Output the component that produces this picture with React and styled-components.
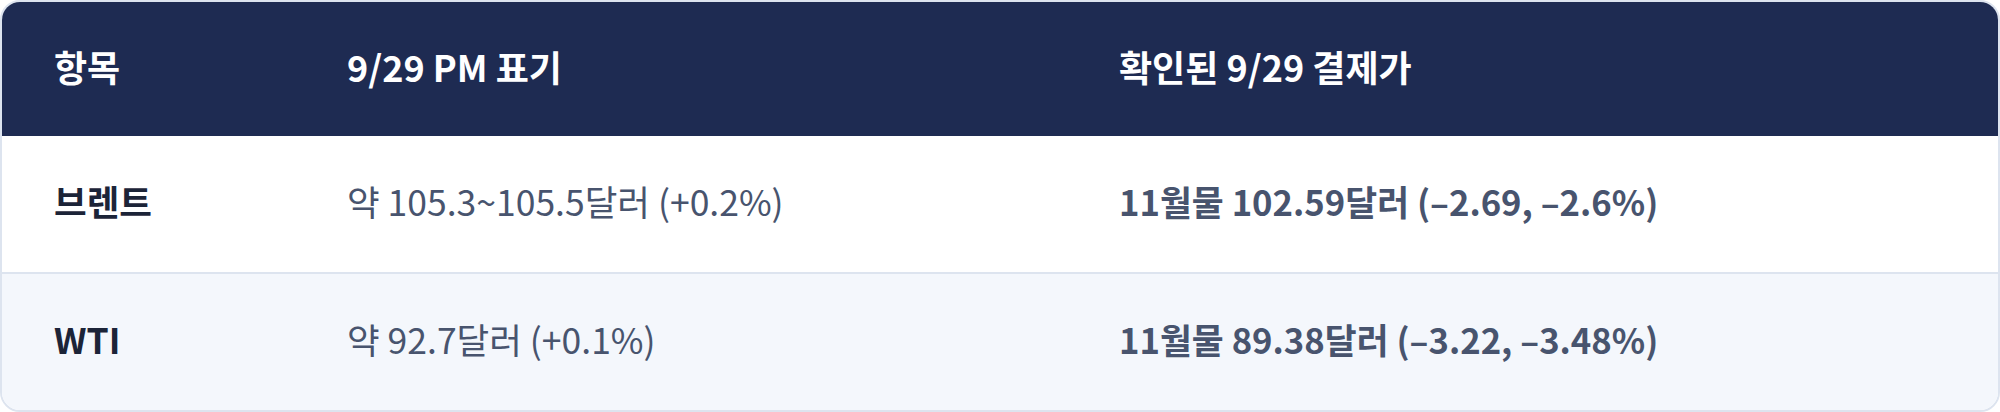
import React from "react";
import styled, { createGlobalStyle } from "styled-components";

const rows = [
  {
    item: "브렌트",
    pm: "약 105.3~105.5달러 (+0.2%)",
    settle: "11월물 102.59달러 (–2.69, –2.6%)",
  },
  {
    item: "WTI",
    pm: "약 92.7달러 (+0.1%)",
    settle: "11월물 89.38달러 (–3.22, –3.48%)",
  },
];

const App = () => {
  return (
    <>
      <GlobalStyle />
      <Table>
        <HeadRow>
          <HeadCell>항목</HeadCell>
          <HeadCell>9/29 PM 표기</HeadCell>
          <HeadCell>확인된 9/29 결제가</HeadCell>
        </HeadRow>
        {rows.map((row, i) => (
          <BodyRow key={row.item} striped={i % 2 === 1} last={i === rows.length - 1}>
            <ItemCell>{row.item}</ItemCell>
            <PmCell>{row.pm}</PmCell>
            <SettleCell>{row.settle}</SettleCell>
          </BodyRow>
        ))}
      </Table>
    </>
  );
};

const GlobalStyle = createGlobalStyle`
  * {
    box-sizing: border-box;
  }
  body {
    margin: 0;
    background: #ffffff;
    font-family: "Noto Sans CJK KR", "Noto Sans", sans-serif;
  }
`;

const Table = styled.div`
  width: 2000px;
  border: 2px solid #dde4ef;
  border-radius: 20px;
  overflow: hidden;
  background: #ffffff;
`;

const Row = styled.div`
  display: grid;
  grid-template-columns: 293px 772px 1fr;
  align-items: center;
`;

const HeadRow = styled(Row)`
  background: #1e2b52;
  height: 134px;
`;

const BodyRow = styled(Row).withConfig({
  shouldForwardProp: (prop) => !["striped", "last"].includes(prop),
})`
  height: ${(p) => (p.last ? "136px" : "138px")};
  background: ${(p) => (p.striped ? "#f4f7fc" : "#ffffff")};
  border-bottom: ${(p) => (p.last ? "none" : "2px solid #dde4ef")};
`;

const Cell = styled.div`
  padding: 0 52px;
  font-size: 35.5px;
  line-height: 50px;
  margin-top: -6px;
  white-space: nowrap;
`;

const HeadCell = styled(Cell)`
  color: #ffffff;
  font-weight: 700;
  font-size: 36px;
`;

const ItemCell = styled(Cell)`
  color: #1c2438;
  font-weight: 700;
`;

const PmCell = styled(Cell)`
  color: #48546e;
  font-weight: 400;
`;

const SettleCell = styled(Cell)`
  color: #48546e;
  font-weight: 700;
  font-size: 34.7px;
`;

export default App;
